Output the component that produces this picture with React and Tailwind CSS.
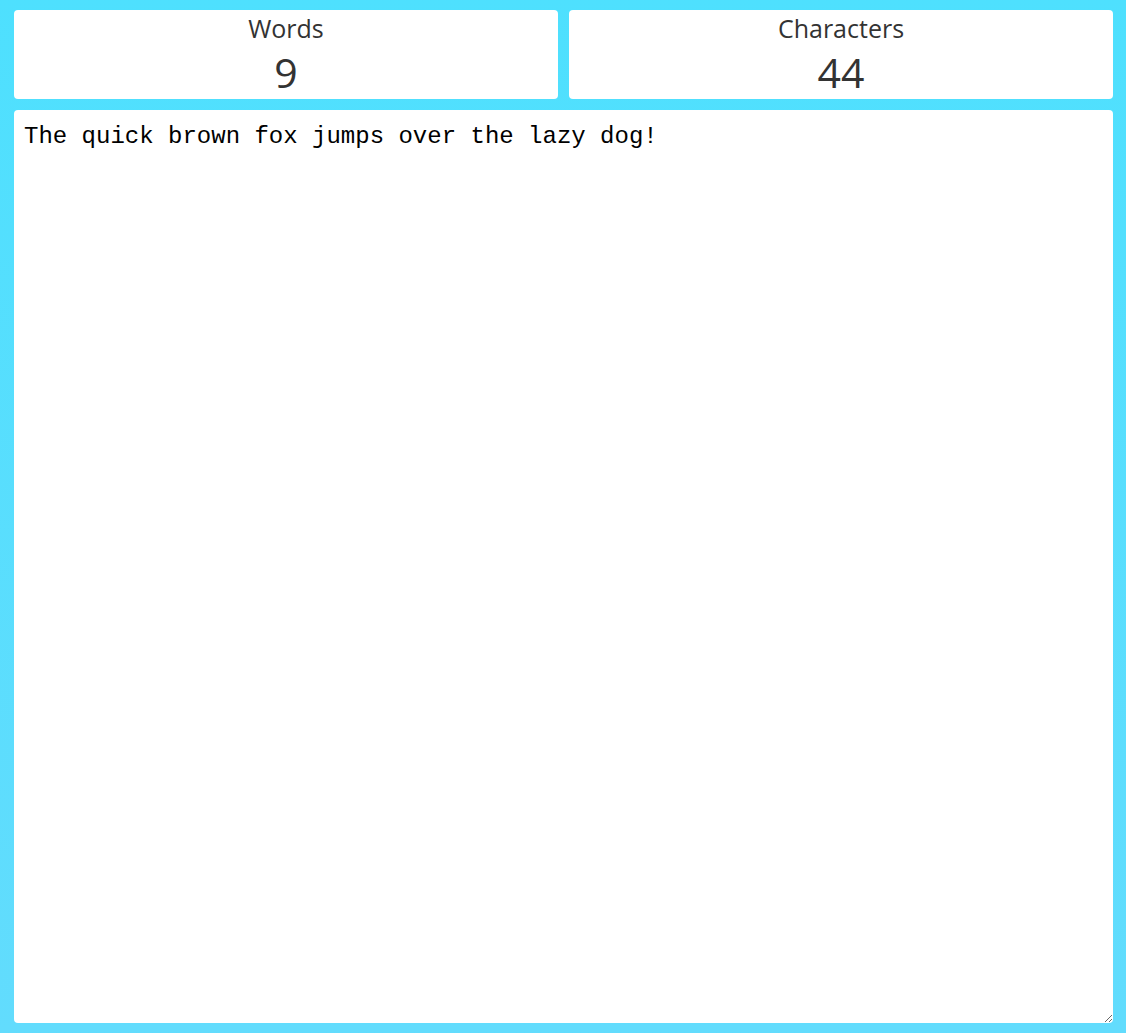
import React, { useState } from "react";

const StatCard = ({ label, value }) => (
  <div className="flex h-[89px] flex-1 flex-col items-center overflow-hidden rounded-[4px] bg-white text-[#333]">
    <span className="text-[25px] leading-[36px]">{label}</span>
    <span className="text-[41px] leading-[53px]">{value}</span>
  </div>
);

export default function App() {
  const [text, setText] = useState("The quick brown fox jumps over the lazy dog!");

  const words = text.trim() ? text.trim().split(/\s+/).length : 0;

  return (
    <div
      className="flex h-[1033px] flex-col gap-[11px] bg-gradient-to-b from-[#4ee0fe] to-[#62dcfd] pb-[10px] pl-[14px] pr-[13px] pt-[10px]"
      style={{ fontFamily: '"Open Sans", sans-serif' }}
    >
      <div className="flex gap-[11px]">
        <StatCard label="Words" value={words} />
        <StatCard label="Characters" value={text.length} />
      </div>
      <textarea
        value={text}
        onChange={(e) => setText(e.target.value)}
        className="flex-1 resize-y rounded-[4px] bg-white px-[10px] pb-[10px] pt-[12px] text-[24px] leading-[30px] text-black outline-none"
        style={{ fontFamily: '"Liberation Mono", "Courier New", monospace' }}
      />
    </div>
  );
}
